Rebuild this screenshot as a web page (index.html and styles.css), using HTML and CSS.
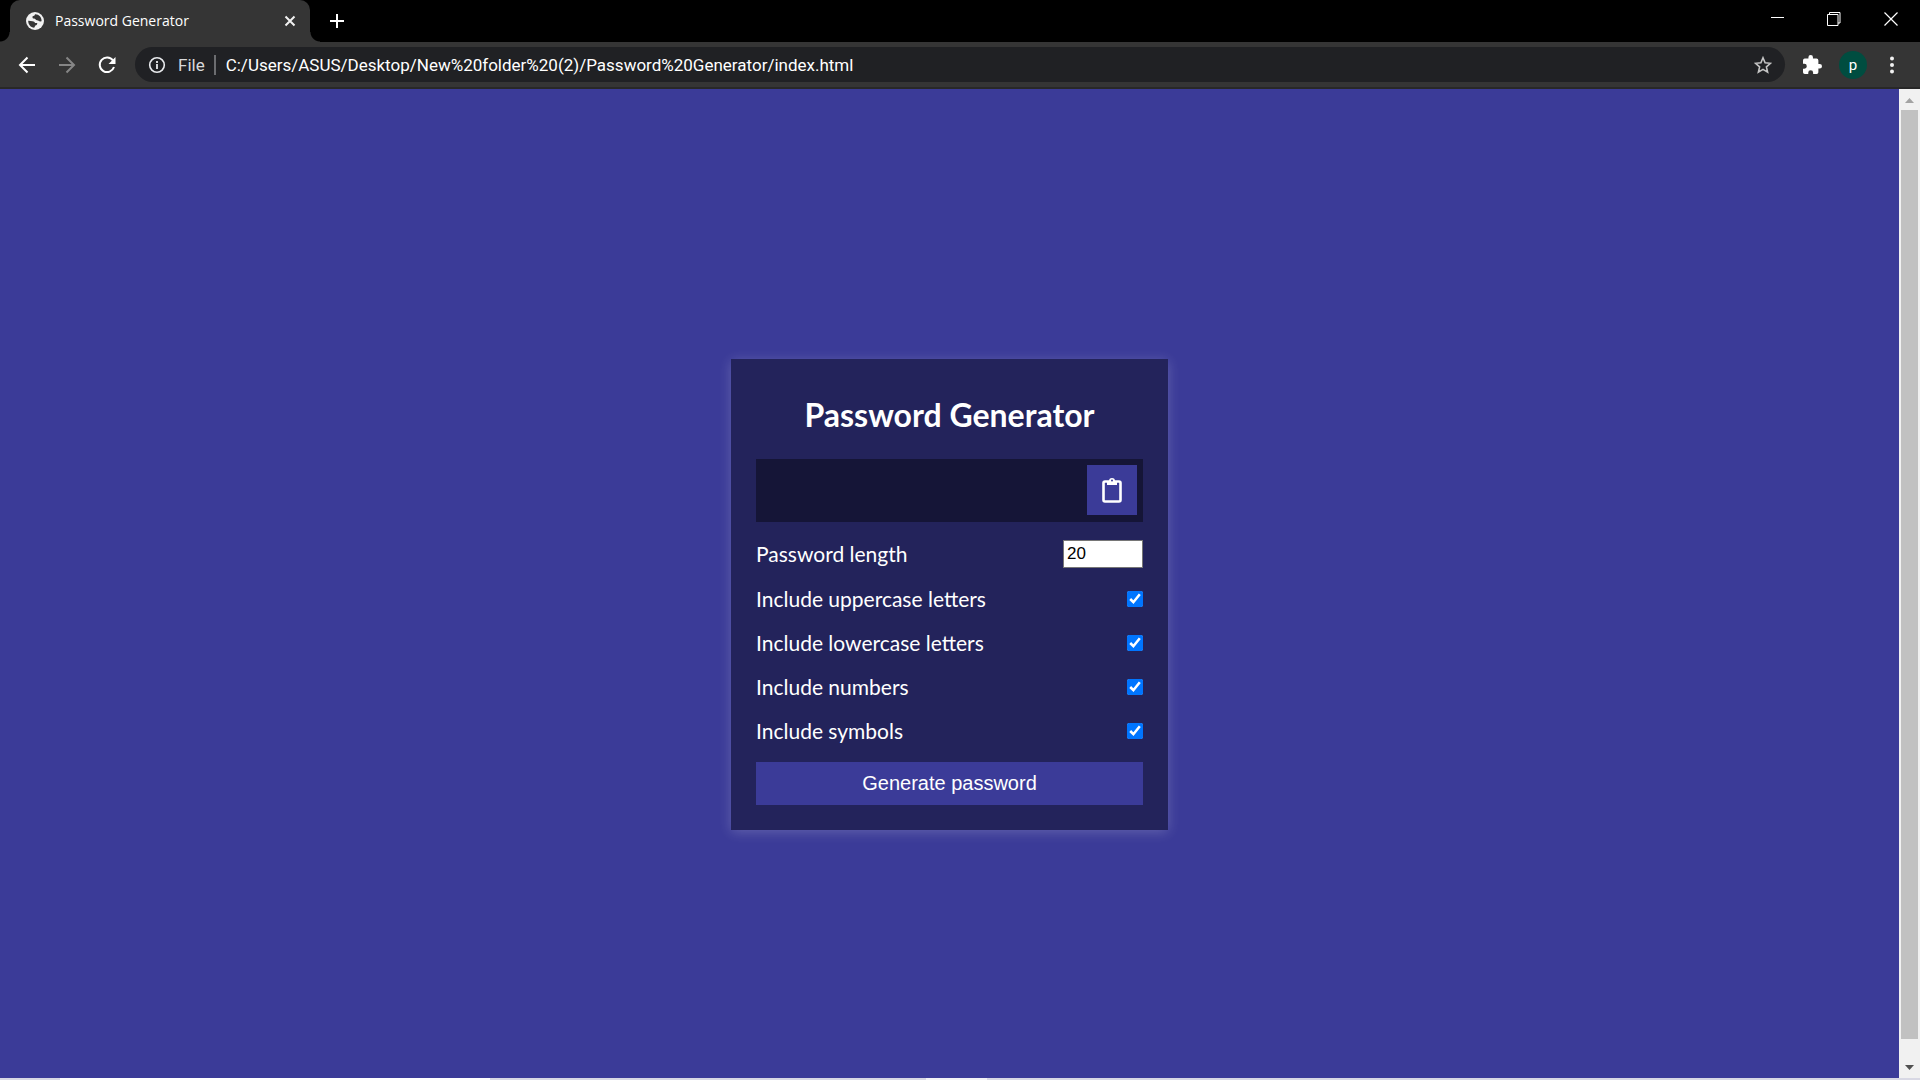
FILE: index.html
```html
<!DOCTYPE html>
<html lang="en">
<head>
<meta charset="utf-8">
<title>Password Generator</title>
<link rel="stylesheet" href="styles.css">
</head>
<body>
<header class="tabs">
  <div class="tab">
    <svg class="globe" viewBox="0 0 18 18" width="18" height="18"><circle cx="9" cy="9" r="9" fill="#f1f1f1"/><path d="M2.200 8.800C3.500 8.600 5 9.200 6.500 9.300c1.500.1 2.200.7 2.500 1.700h2.200c.3 1.500-.7 2.200-1.900 2.400-.3 1-.9 1.500-1.100 2.400C4.600 15.500 2.200 12.600 2.200 8.800z" fill="#353535"/><path d="M9 2.200c-.2 1.600-1.400 1.800-2.400 2-.2 1.400-.2 2.300 1.400 2.300 1.300 0 1.600 1.700 3 1.800 1.600.1 1.700 1.400 4.600 1C15.800 5 12.800 2 9 2.200z" fill="#353535"/></svg>
    <span class="tab-title">Password Generator</span>
    <button class="icon" aria-label="Close tab"><svg viewBox="0 0 12 12" width="12" height="12"><path d="M1.500 1.500l9 9m0-9l-9 9" stroke="#f1f1f1" stroke-width="2"/></svg></button>
  </div>
  <button class="icon new-tab" aria-label="New tab"><svg viewBox="0 0 16 16" width="16" height="16"><path d="M8 1v14M1 8h14" stroke="#fff" stroke-width="2"/></svg></button>
  <div class="window-controls">
    <button class="icon" aria-label="Minimize"><svg viewBox="0 0 14 14" width="14" height="14"><path d="M1 5.500h13" stroke="#fff"/></svg></button>
    <button class="icon" aria-label="Restore"><svg viewBox="0 0 14 14" width="14" height="14"><path d="M.5 2.500h10.500v11H.5zM2.500 2.500V.5h10.500v10.500h-2" fill="none" stroke="#fff"/></svg></button>
    <button class="icon" aria-label="Close window"><svg viewBox="0 0 14 14" width="14" height="14"><path d="M.5.5l13 13m0-13l-13 13" stroke="#fff" stroke-width="1.200"/></svg></button>
  </div>
</header>
<nav class="toolbar">
  <button class="icon" aria-label="Back"><svg viewBox="0 0 18 18" width="18" height="18"><path d="M17 9H2m7.500-7.500L2 9l7.500 7.500" fill="none" stroke="#fff" stroke-width="2"/></svg></button>
  <button class="icon" aria-label="Forward"><svg viewBox="0 0 18 18" width="18" height="18"><path d="M1 9h15M8.500 1.500L16 9l-7.500 7.500" fill="none" stroke="#868686" stroke-width="2"/></svg></button>
  <button class="icon" aria-label="Reload"><svg viewBox="0 0 18 18" width="18" height="18"><path d="M15 4.500A7.300 7.300 0 1 0 16 11" fill="none" stroke="#fff" stroke-width="2"/><path d="M17.500 1v7h-7z" fill="#fff"/></svg></button>
  <div class="omnibox">
    <svg viewBox="0 0 18 18" width="18" height="18"><circle cx="9" cy="9" r="7.300" fill="none" stroke="#e8eaed" stroke-width="1.600"/><path d="M9 8v5M9 5v2" stroke="#e8eaed" stroke-width="1.800"/></svg>
    <span class="scheme">File</span>
    <input class="url" aria-label="Address" value="C:/Users/ASUS/Desktop/New%20folder%20(2)/Password%20Generator/index.html">
    <button class="icon" aria-label="Bookmark"><svg viewBox="0 0 18 18" width="18" height="18"><path d="M9 1.800l2.100 5 5.400.5-4.100 3.600 1.200 5.300L9 13.400l-4.600 2.800 1.200-5.300-4.100-3.600 5.400-.5z" fill="none" stroke="#c4c4c4" stroke-width="1.600"/></svg></button>
  </div>
  <button class="icon" aria-label="Extensions"><svg viewBox="2 1 21 21" width="19" height="19"><path d="M20.500 11H19V7a2 2 0 0 0-2-2h-4V3.500a2.500 2.500 0 0 0-5 0V5H4a2 2 0 0 0-2 2v3.800h1.500a2.700 2.700 0 0 1 0 5.400H2V20a2 2 0 0 0 2 2h3.800v-1.500a2.700 2.700 0 0 1 5.400 0V22H17a2 2 0 0 0 2-2v-4h1.500a2.500 2.500 0 0 0 0-5z" fill="#fff"/></svg></button>
  <button class="icon avatar" aria-label="Profile">p</button>
  <button class="icon" aria-label="Menu"><svg viewBox="0 0 6 18" width="6" height="18"><circle cx="3" cy="2.500" r="2" fill="#f1f1f1"/><circle cx="3" cy="9" r="2" fill="#f1f1f1"/><circle cx="3" cy="15.500" r="2" fill="#f1f1f1"/></svg></button>
</nav>
<div class="viewport">
  <main class="page">
    <form class="card">
      <h2 class="heading">Password Generator</h2>
      <div class="result">
        <button type="button" class="copy" aria-label="Copy to clipboard"><svg viewBox="0 0 20 26" width="20" height="26"><rect x="1.500" y="4.500" width="17" height="20" rx="1.500" fill="none" stroke="#fff" stroke-width="2.600"/><path d="M5 4h2a3 3 0 0 1 6 0h2v4H5z" fill="#fff"/><circle cx="10" cy="3.600" r="1" fill="#3b3b98"/></svg></button>
      </div>
      <div class="setting"><label for="length">Password length</label><input class="length" id="length" type="number" value="20" min="4" max="20"></div>
      <div class="setting"><label for="upper">Include uppercase letters</label><input class="check" id="upper" type="checkbox" checked></div>
      <div class="setting"><label for="lower">Include lowercase letters</label><input class="check" id="lower" type="checkbox" checked></div>
      <div class="setting"><label for="numbers">Include numbers</label><input class="check" id="numbers" type="checkbox" checked></div>
      <div class="setting"><label for="symbols">Include symbols</label><input class="check" id="symbols" type="checkbox" checked></div>
      <button type="button" class="generate">Generate password</button>
    </form>
  </main>
  <div class="scrollbar">
    <svg viewBox="0 0 9 5" width="9" height="5"><path d="M0 5l4.500-5L9 5z" fill="#a3a3a3"/></svg>
    <div class="thumb"></div>
    <svg viewBox="0 0 9 5" width="9" height="5"><path d="M0 0l4.500 5L9 0z" fill="#505050"/></svg>
  </div>
</div>
<div class="taskbar"></div>
</body>
</html>
```
FILE: styles.css
```css
* { box-sizing: border-box; }

body {
  margin: 0;
  height: 100vh;
  display: flex;
  flex-direction: column;
  background: #000;
  color: #fff;
  font-family: "Open Sans", "Noto Sans", sans-serif;
}

svg { display: block; flex: none; }

.icon {
  display: flex;
  align-items: center;
  justify-content: center;
  padding: 0;
  border: 0;
  background: none;
}

/* Browser frame */
.tabs {
  display: flex;
  align-items: center;
  height: 42px;
  padding-left: 10px;
  flex: none;
}

.tab {
  position: relative;
  display: flex;
  align-items: center;
  width: 300px;
  height: 42px;
  padding: 0 14px 0 16px;
  background: #353535;
  border-radius: 10px 10px 0 0;
}

.tab::before,
.tab::after {
  content: "";
  position: absolute;
  bottom: 0;
  width: 10px;
  height: 10px;
}

.tab::before {
  left: -10px;
  background: radial-gradient(circle at 0 0, #000 9px, #353535 10px);
}

.tab::after {
  right: -10px;
  background: radial-gradient(circle at 100% 0, #000 9px, #353535 10px);
}

.tab-title {
  flex: 1;
  margin-left: 11px;
  font-size: 14px;
  line-height: 20px;
}

.new-tab { margin-left: 19px; }

.window-controls {
  display: flex;
  gap: 43px;
  margin-left: auto;
  padding: 0 22px 5px 0;
}

.toolbar {
  display: flex;
  align-items: center;
  gap: 22px;
  height: 47px;
  padding: 0 25px 0 18px;
  flex: none;
  background: #353535;
  border-bottom: 2px solid #282828;
}

.omnibox {
  display: flex;
  align-items: center;
  flex: 1;
  height: 35px;
  margin: 0 -4px 0 -3px;
  padding: 0 13px;
  border-radius: 18px;
  background: #202124;
  font-family: Roboto, sans-serif;
  font-size: 17px;
}

.scheme {
  margin-left: 12px;
  padding-right: 9px;
  border-right: 2px solid #6c6d70;
  line-height: 20px;
  color: #d8d9db;
}

.url {
  flex: 1;
  min-width: 0;
  padding: 0;
  margin-left: 10px;
  border: 0;
  background: none;
  color: #fff;
  font: inherit;
}

.avatar {
  width: 28px;
  height: 28px;
  margin: 0 0 0 -5px;
  border-radius: 50%;
  background: #004d40;
  color: #fff;
  font-family: Roboto, sans-serif;
  font-size: 15px;
}

/* Page */
.viewport {
  display: flex;
  flex: 1;
  min-height: 0;
}

.page {
  display: flex;
  align-items: center;
  justify-content: center;
  flex: 1;
  padding-top: 22px;
  background: #3b3b98;
}

.card {
  display: flex;
  flex-direction: column;
  gap: 18px;
  width: 437px;
  padding: 25px;
  background: #23235b;
  box-shadow: 0 2px 12px rgba(255, 255, 255, 0.2);
  font-family: Lato, sans-serif;
  font-size: 21px;
}

.heading {
  margin: 12px 0 7px;
  font-size: 32px;
  line-height: 38px;
  text-align: center;
}

.result {
  display: flex;
  justify-content: flex-end;
  height: 63px;
  padding: 6px;
  background: #151537;
}

.copy {
  display: flex;
  align-items: center;
  justify-content: center;
  width: 50px;
  height: 50px;
  padding: 0;
  border: 0;
  background: #3b3b98;
}

.setting {
  display: flex;
  align-items: center;
  justify-content: space-between;
  line-height: 26px;
}

.length {
  width: 80px;
  height: 28px;
  padding: 0 3px;
  border: 1px solid #767676;
  background: #fff;
  color: #000;
  font-family: "Liberation Sans", Arial, sans-serif;
  font-size: 17px;
}

.check {
  width: 16px;
  height: 16px;
  margin: 0;
  accent-color: #0075ff;
}

.generate {
  height: 43px;
  padding: 0;
  border: 0;
  background: #3b3b98;
  color: #fff;
  font-family: "Liberation Sans", Arial, sans-serif;
  font-size: 20px;
}

.scrollbar {
  display: flex;
  flex-direction: column;
  align-items: center;
  gap: 7px;
  width: 21px;
  padding: 9px 0 8px;
  background: #f1f1f1;
}

.thumb {
  width: 17px;
  flex: 1;
  margin-bottom: 19px;
  background: #c1c1c1;
}

.taskbar {
  height: 2px;
  flex: none;
  background: linear-gradient(to right, #d8d8e4 60px, #fff 60px 490px, #d8d8e4 490px 926px, #f2f2f6 926px 987px, #d8d8e4 987px);
}
```
